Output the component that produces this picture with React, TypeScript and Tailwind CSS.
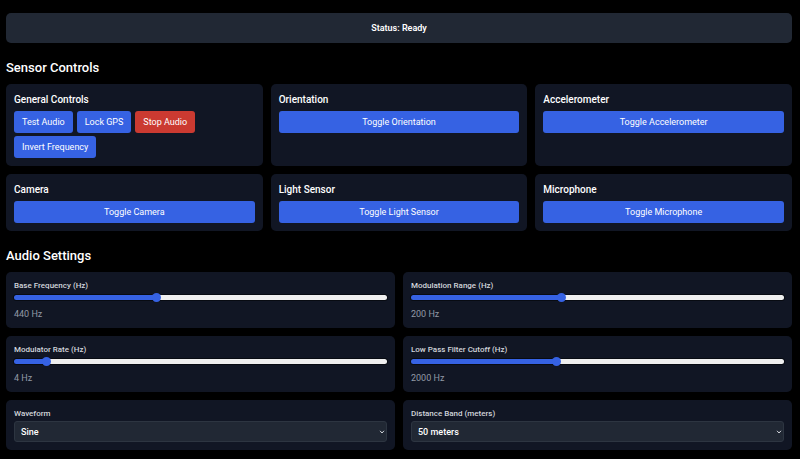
import { useId, useState } from "react";
import type { CSSProperties } from "react";

const sensors = ["Orientation", "Accelerometer", "Camera", "Light Sensor", "Microphone"];

const sliders = [
  { label: "Base Frequency (Hz)", min: 100, max: 1000, step: 1, initial: 440 },
  { label: "Modulation Range (Hz)", min: 0, max: 500, step: 1, initial: 200 },
  { label: "Modulator Rate (Hz)", min: 0.1, max: 50, step: 0.1, initial: 4 },
  { label: "Low Pass Filter Cutoff (Hz)", min: 100, max: 5000, step: 1, initial: 2000 },
];

const buttonBase = "block h-[22px] rounded-[3px] px-2 text-[9px] leading-3 font-normal text-white";

function SensorCard({ name }: { name: string }) {
  return (
    <section className="rounded-[5px] bg-[#111624] p-2">
      <h3 className="mb-[3px] text-[10px] leading-4 font-medium">{name}</h3>
      <button type="button" className={`${buttonBase} w-full bg-[#3662e3]`}>
        Toggle {name}
      </button>
    </section>
  );
}

function SliderCard({ label, min, max, step, initial }: (typeof sliders)[number]) {
  const id = useId();
  const [value, setValue] = useState(initial);
  const fill = { "--fill": `${((value - min) / (max - min)) * 100}%` } as CSSProperties;
  return (
    <div className="rounded-[5px] bg-[#111624] p-2">
      <label htmlFor={id} className="block text-[8px] leading-3 font-medium text-[#d1d5db]">
        {label}
      </label>
      <input
        id={id}
        type="range"
        min={min}
        max={max}
        step={step}
        value={value}
        onChange={(e) => setValue(Number(e.target.value))}
        style={fill}
        className="block h-[11px] w-full appearance-none bg-transparent [&::-webkit-slider-runnable-track]:h-[5px] [&::-webkit-slider-runnable-track]:rounded-full [&::-webkit-slider-runnable-track]:bg-[linear-gradient(to_right,#3662e3_var(--fill),#efefef_var(--fill))] [&::-webkit-slider-runnable-track]:shadow-[0_0_0_1px_rgba(0,0,0,0.5)] [&::-webkit-slider-thumb]:-mt-[2px] [&::-webkit-slider-thumb]:size-[9px] [&::-webkit-slider-thumb]:appearance-none [&::-webkit-slider-thumb]:rounded-full [&::-webkit-slider-thumb]:bg-[#3662e3]"
      />
      <p className="mt-[5px] text-[9px] leading-3 text-[#9299a6]">{value} Hz</p>
    </div>
  );
}

function SelectCard({ label, options }: { label: string; options: string[] }) {
  const id = useId();
  return (
    <div className="rounded-[5px] bg-[#111624] p-2">
      <label htmlFor={id} className="block text-[8px] leading-3 font-medium text-[#d1d5db]">
        {label}
      </label>
      <div className="relative mt-px">
        <select
          id={id}
          className="block h-[21px] w-full appearance-none rounded-[3px] border border-[#2d3541] bg-[#212834] px-1.5 text-[9px] leading-3 font-medium text-white"
        >
          {options.map((option) => (
            <option key={option}>{option}</option>
          ))}
        </select>
        <svg
          viewBox="0 0 6 4"
          className="pointer-events-none absolute top-1/2 right-0.5 h-1 w-1.5 -translate-y-1/2"
          fill="none"
          stroke="#d1d5db"
          strokeWidth="1"
          aria-hidden="true"
        >
          <path d="M1 .8 3 3 5 .8" />
        </svg>
      </div>
    </div>
  );
}

export default function App() {
  return (
    <main className="min-h-screen bg-black pt-[13px] pr-2 pb-2 pl-1.5 font-['Roboto','Liberation_Sans',sans-serif] text-white">
      <div
        role="status"
        className="flex h-[30px] items-center justify-center rounded-[5px] bg-[#212834] text-[9px] leading-3 font-semibold"
      >
        Status: Ready
      </div>

      <h2 className="mt-4 mb-[7px] text-[13px] leading-[18px] font-medium">Sensor Controls</h2>
      <div className="grid grid-cols-3 gap-2">
        <section className="rounded-[5px] bg-[#111624] p-2">
          <h3 className="mb-[3px] text-[10px] leading-4 font-medium">General Controls</h3>
          <div className="flex flex-wrap gap-x-1 gap-y-[3px]">
            <button type="button" className={`${buttonBase} bg-[#3662e3]`}>Test Audio</button>
            <button type="button" className={`${buttonBase} bg-[#3662e3]`}>Lock GPS</button>
            <button type="button" className={`${buttonBase} bg-[#cb3a31]`}>Stop Audio</button>
            <button type="button" className={`${buttonBase} bg-[#3662e3]`}>Invert Frequency</button>
          </div>
        </section>
        {sensors.map((name) => (
          <SensorCard key={name} name={name} />
        ))}
      </div>

      <h2 className="mt-4 mb-[7px] text-[13px] leading-[18px] font-medium">Audio Settings</h2>
      <div className="grid grid-cols-2 gap-2">
        {sliders.map((slider) => (
          <SliderCard key={slider.label} {...slider} />
        ))}
        <SelectCard label="Waveform" options={["Sine", "Square", "Sawtooth", "Triangle"]} />
        <SelectCard label="Distance Band (meters)" options={["50 meters", "100 meters", "200 meters"]} />
      </div>
    </main>
  );
}
